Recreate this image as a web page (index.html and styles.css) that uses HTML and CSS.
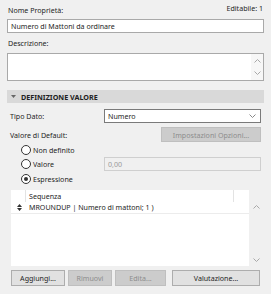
FILE: index.html
```html
<!DOCTYPE html>
<html lang="it">
<head>
<meta charset="utf-8">
<link rel="stylesheet" href="styles.css">
</head>
<body>
<div class="panel">
  <div class="row-top">
    <span class="lbl top-lbl">Nome Proprietà:</span>
    <span class="editable">Editabile: 1</span>
  </div>
  <div class="textbox name">Numero di Mattoni da ordinare</div>
  <div class="lbl desc-lbl">Descrizione:</div>
  <div class="textarea">
    <div class="ta-body"></div>
    <div class="vscroll ta-scroll">
      <svg width="7" height="4" viewBox="0 0 7 4"><path d="M0.5 3.5 L3.5 0.5 L6.5 3.5" fill="none" stroke="#a8a8a8" stroke-width="1"/></svg>
      <svg width="7" height="4" viewBox="0 0 7 4"><path d="M0.5 0.5 L3.5 3.5 L6.5 0.5" fill="none" stroke="#a8a8a8" stroke-width="1"/></svg>
    </div>
  </div>
  <div class="section-header">
    <svg class="tri" width="5" height="3" viewBox="0 0 5 3"><path d="M0 0 H5 L2.5 3 Z" fill="#666"/></svg>
    <span>DEFINIZIONE VALORE</span>
  </div>
  <div class="field-row r-tipo">
    <span class="lbl">Tipo Dato:</span>
    <div class="select">
      <span>Numero</span>
      <svg width="7" height="4" viewBox="0 0 7 4"><path d="M0.5 0.5 L3.5 3.5 L6.5 0.5" fill="none" stroke="#888" stroke-width="1"/></svg>
    </div>
  </div>
  <div class="field-row r-default">
    <span class="lbl">Valore di Default:</span>
    <div class="btn disabled opts">Impostazioni Opzioni...</div>
  </div>
  <div class="radio-row r1">
    <span class="radio"></span><span class="lbl">Non definito</span>
  </div>
  <div class="radio-row r2">
    <span class="radio"></span><span class="lbl">Valore</span>
    <div class="textbox value">0,00</div>
  </div>
  <div class="radio-row r3">
    <span class="radio checked"></span><span class="lbl">Espressione</span>
  </div>
  <div class="table-wrap">
    <div class="table">
      <div class="thead">
        <div class="th-icon"></div>
        <div class="th-main">Sequenza</div>
        <div class="th-extra"></div>
      </div>
      <div class="trow">
        <div class="td-icon">
          <svg width="5" height="7" viewBox="0 0 5 7"><path d="M0 3 L2.5 0 L5 3 Z M0 4 L2.5 7 L5 4 Z" fill="#333"/></svg>
        </div>
        <div class="td-main">MROUNDUP | Numero di mattoni; 1 )</div>
      </div>
    </div>
    <div class="vscroll tbl-scroll">
      <svg width="7" height="4" viewBox="0 0 7 4"><path d="M0.5 3.5 L3.5 0.5 L6.5 3.5" fill="none" stroke="#a8a8a8" stroke-width="1"/></svg>
      <svg width="7" height="4" viewBox="0 0 7 4"><path d="M0.5 0.5 L3.5 3.5 L6.5 0.5" fill="none" stroke="#a8a8a8" stroke-width="1"/></svg>
    </div>
  </div>
  <div class="buttons">
    <div class="btn b-add">Aggiungi...</div>
    <div class="btn disabled b-rem">Rimuovi</div>
    <div class="btn disabled b-edit">Edita...</div>
    <div class="btn b-eval">Valutazione...</div>
  </div>
</div>
</body>
</html>
```

FILE: styles.css
```css
* { box-sizing: border-box; }
html, body {
  margin: 0;
  padding: 0;
  background: #f0f0f0;
}
body {
  width: 271px;
  height: 294px;
  overflow: hidden;
  font-family: "Noto Sans", "Liberation Sans", sans-serif;
  font-size: 7.1px;
  color: #1e1e1e;
}
.panel {
  padding: 0 7px;
}
.lbl {
  line-height: 10px;
  white-space: nowrap;
}
.row-top {
  height: 19px;
  display: flex;
  justify-content: space-between;
  align-items: flex-start;
}
.top-lbl {
  margin-top: 5px;
  margin-left: 1px;
}
.editable {
  margin-top: 3px;
  line-height: 10px;
  margin-right: 1px;
}
.textbox {
  height: 14px;
  border: 1px solid #a9a9a9;
  background: #fff;
  line-height: 12px;
  padding-left: 3px;
  white-space: nowrap;
}
.desc-lbl {
  display: block;
  height: 20px;
  padding-top: 5px;
  margin-left: 1px;
}
.textarea {
  height: 28px;
  border: 1px solid #a9a9a9;
  background: #fff;
  display: flex;
}
.ta-body { flex: 1; }
.vscroll {
  width: 12px;
  display: flex;
  flex-direction: column;
  justify-content: space-between;
  align-items: center;
}
.ta-scroll {
  background: #f7f7f7;
  padding: 5px 0 5px;
}
.section-header {
  margin-top: 9px;
  height: 13px;
  background: #d9d9d9;
  display: flex;
  align-items: center;
  padding-left: 4px;
  font-weight: 700;
  font-size: 7.2px;
  color: #222;
}
.section-header .tri {
  margin-right: 5px;
}
.field-row {
  display: flex;
  align-items: center;
  justify-content: space-between;
  padding: 0 3px 0 3px;
}
.r-tipo {
  margin-top: 6px;
  height: 14px;
}
.select {
  width: 157px;
  height: 14px;
  border: 1px solid #7a7a7a;
  background: #fff;
  display: flex;
  align-items: center;
  justify-content: space-between;
  padding: 0 4px 0 3px;
}
.r-default {
  margin-top: 4px;
  height: 15px;
}
.btn {
  height: 16px;
  border: 1px solid #adadad;
  background: #e1e1e1;
  display: flex;
  align-items: center;
  justify-content: center;
  white-space: nowrap;
}
.btn.disabled {
  background: #cccccc;
  border-color: #bfbfbf;
  color: #8d8d8d;
}
.opts {
  width: 100px;
  height: 15px;
}
.radio-row {
  display: flex;
  align-items: center;
  padding-left: 14px;
}
.r1 { height: 15px; }
.r2 { height: 14px; }
.r3 { height: 15px; }
.radio {
  width: 10px;
  height: 10px;
  border: 1px solid #333;
  border-radius: 50%;
  background: #fff;
  margin-right: 2px;
  position: relative;
}
.radio.checked::after {
  content: "";
  position: absolute;
  left: 2px;
  top: 2px;
  width: 4px;
  height: 4px;
  border-radius: 50%;
  background: #333;
}
.textbox.value {
  margin-left: auto;
  margin-right: 3px;
  width: 157px;
  background: #f0f0f0;
  border-color: #cfcfcf;
  color: #9a9a9a;
}
.table-wrap {
  margin-top: 4px;
  height: 76px;
  display: flex;
  padding-left: 4px;
}
.table {
  flex: 1;
  background: #fff;
}
.thead {
  height: 12px;
  display: flex;
}
.th-icon {
  width: 15px;
  border-right: 1px solid #e3e3e3;
}
.th-main {
  flex: 1;
  padding-left: 3px;
  line-height: 12px;
}
.th-extra {
  width: 16px;
  border-left: 1px solid #e3e3e3;
}
.trow {
  height: 12px;
  display: flex;
  border-bottom: 1px solid #ececec;
}
.td-icon {
  width: 15px;
  display: flex;
  align-items: center;
  justify-content: center;
  padding-left: 1px;
}
.td-main {
  padding-left: 3px;
  line-height: 11px;
  white-space: nowrap;
}
.tbl-scroll {
  width: 15px;
  padding: 15px 0 4px;
}
.buttons {
  margin-top: 4px;
  display: flex;
  padding-left: 4px;
}
.b-add { width: 54px; }
.b-rem { width: 44px; margin-left: 3px; }
.b-edit { width: 51px; margin-left: 3px; }
.b-eval { width: 88px; margin-left: 6px; }
```
